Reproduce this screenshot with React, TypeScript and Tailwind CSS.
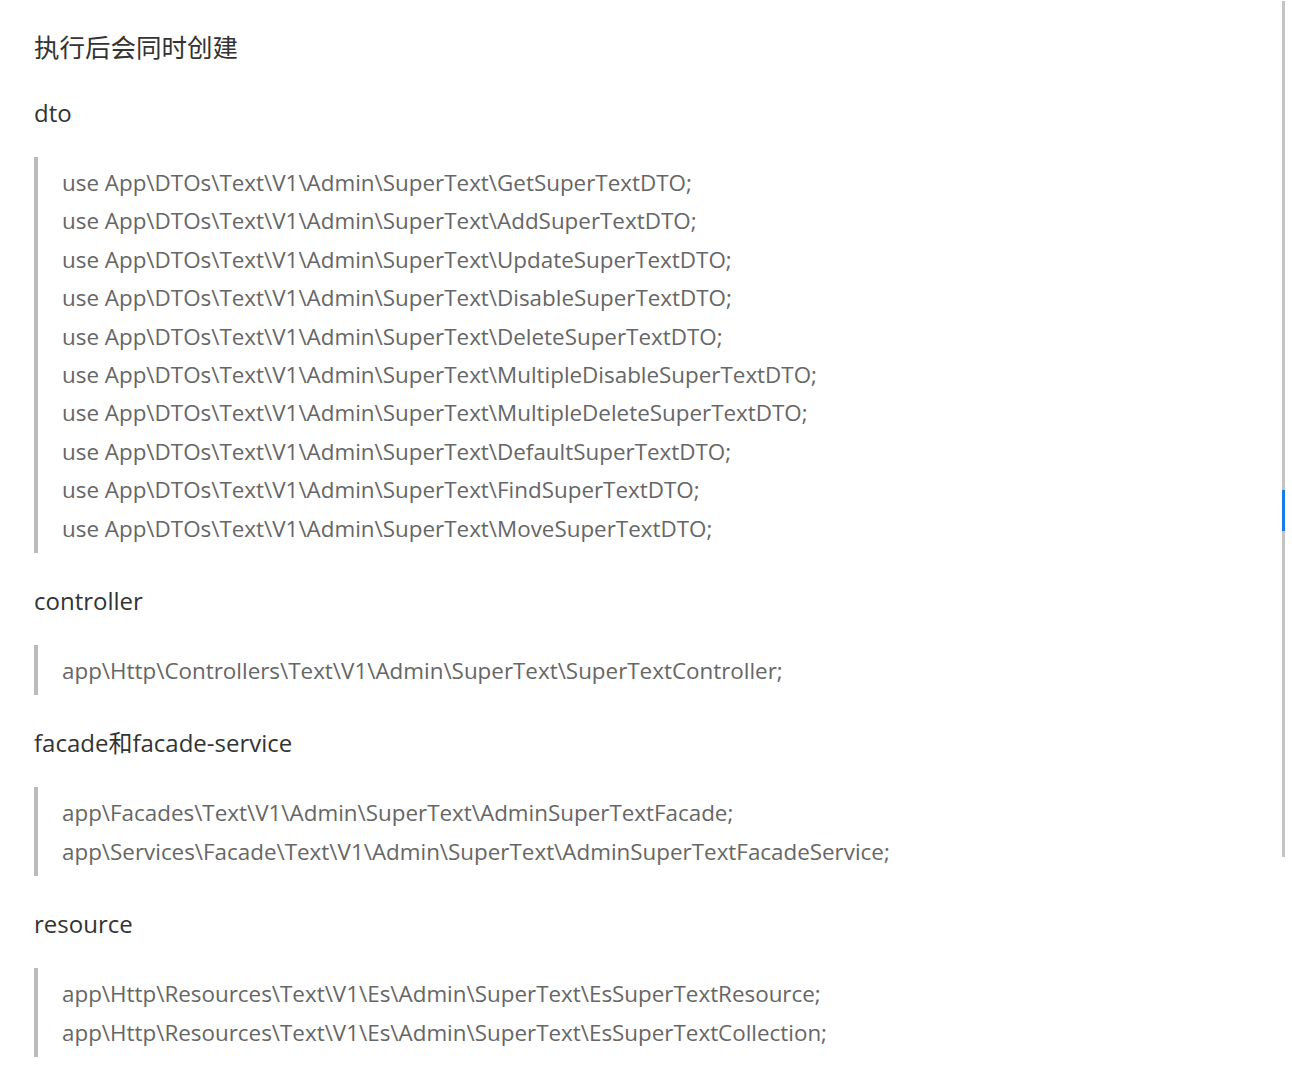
const sections = [
  {
    title: 'dto',
    lines: [
      'use App\\DTOs\\Text\\V1\\Admin\\SuperText\\GetSuperTextDTO;',
      'use App\\DTOs\\Text\\V1\\Admin\\SuperText\\AddSuperTextDTO;',
      'use App\\DTOs\\Text\\V1\\Admin\\SuperText\\UpdateSuperTextDTO;',
      'use App\\DTOs\\Text\\V1\\Admin\\SuperText\\DisableSuperTextDTO;',
      'use App\\DTOs\\Text\\V1\\Admin\\SuperText\\DeleteSuperTextDTO;',
      'use App\\DTOs\\Text\\V1\\Admin\\SuperText\\MultipleDisableSuperTextDTO;',
      'use App\\DTOs\\Text\\V1\\Admin\\SuperText\\MultipleDeleteSuperTextDTO;',
      'use App\\DTOs\\Text\\V1\\Admin\\SuperText\\DefaultSuperTextDTO;',
      'use App\\DTOs\\Text\\V1\\Admin\\SuperText\\FindSuperTextDTO;',
      'use App\\DTOs\\Text\\V1\\Admin\\SuperText\\MoveSuperTextDTO;',
    ],
  },
  {
    title: 'controller',
    lines: ['app\\Http\\Controllers\\Text\\V1\\Admin\\SuperText\\SuperTextController;'],
  },
  {
    title: 'facade和facade-service',
    lines: [
      'app\\Facades\\Text\\V1\\Admin\\SuperText\\AdminSuperTextFacade;',
      'app\\Services\\Facade\\Text\\V1\\Admin\\SuperText\\AdminSuperTextFacadeService;',
    ],
  },
  {
    title: 'resource',
    lines: [
      'app\\Http\\Resources\\Text\\V1\\Es\\Admin\\SuperText\\EsSuperTextResource;',
      'app\\Http\\Resources\\Text\\V1\\Es\\Admin\\SuperText\\EsSuperTextCollection;',
    ],
  },
];

export default function App() {
  return (
    <div
      className="relative min-h-[1077px] bg-white"
      style={{ fontFamily: '"Open Sans", "Noto Sans CJK SC", sans-serif' }}
    >
      <div className="px-[34px] pt-[28px]">
        <h2 className="text-[25.5px] leading-[38px] text-[#333]">执行后会同时创建</h2>
        {sections.map((s, i) => (
          <div key={s.title}>
            <h3
              className={
                i === 0
                  ? 'mt-[28px] text-[24px] leading-[38px] text-[#333]'
                  : 'mt-[29px] text-[24px] leading-[38px] text-[#333]'
              }
            >
              {s.title}
            </h3>
            <blockquote className="mt-[25px] border-l-[4px] border-[#bbbbbb] pt-[7px] pb-[5px] pl-[24px]">
              {s.lines.map((l) => (
                <p key={l} className="text-[22.4px] leading-[38.4px] text-[#666]">
                  {l}
                </p>
              ))}
            </blockquote>
          </div>
        ))}
      </div>

      {/* scrollbar */}
      <div className="absolute right-[7px] top-px h-[856px] w-[3px] bg-[#c4c4c4]">
        <div className="absolute left-0 top-[489px] h-[41px] w-[3px] bg-[#1a7ae8]" />
      </div>
    </div>
  );
}
